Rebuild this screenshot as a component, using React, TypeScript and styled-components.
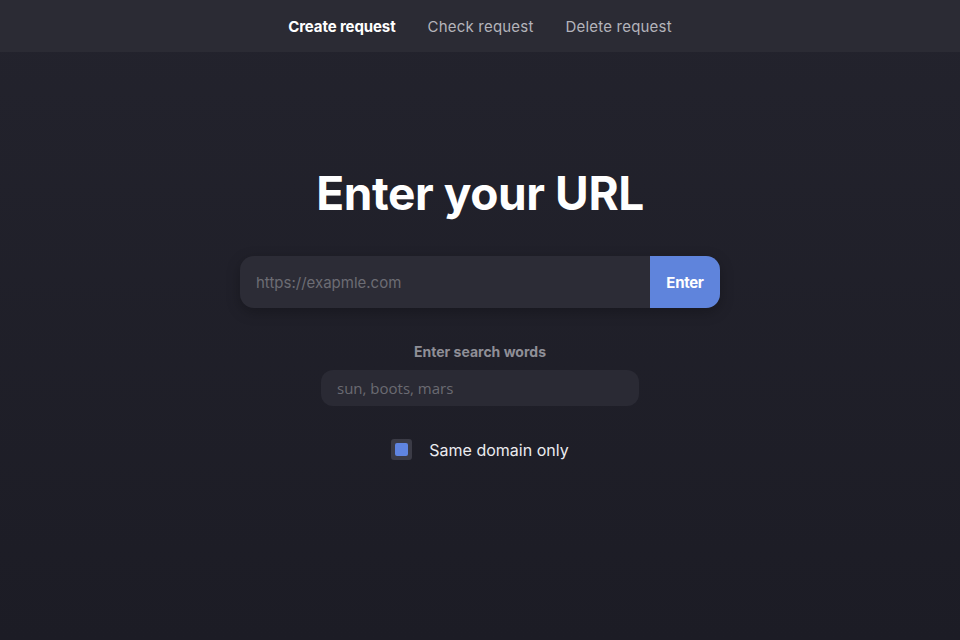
import React from "react";
import styled, { createGlobalStyle } from "styled-components";

const Global = createGlobalStyle`
  html, body { margin: 0; padding: 0; }
  body {
    background: linear-gradient(180deg, #23232d 0%, #1c1c25 100%);
    min-height: 100vh;
    font-family: Inter, "Noto Sans", sans-serif;
    color: #fff;
  }
  * { box-sizing: border-box; }
`;

const Page = styled.div`
  min-height: 640px;
  display: flex;
  flex-direction: column;
`;

const Header = styled.header`
  height: 52px;
  background: #2b2b34;
  display: flex;
  justify-content: center;
  align-items: center;
  gap: 32px;
`;

const NavItem = styled.a<{ $active?: boolean }>`
  font-size: 15px;
  font-weight: ${(p) => (p.$active ? 700 : 400)};
  color: ${(p) => (p.$active ? "#ffffff" : "#b4b4bb")};
  text-decoration: none;
  cursor: pointer;
  letter-spacing: ${(p) => (p.$active ? "-0.1px" : "0.2px")};
`;

const Main = styled.main`
  display: flex;
  flex-direction: column;
  align-items: center;
  padding-top: 113px;
`;

const Title = styled.h1`
  margin: 0;
  font-size: 46px;
  font-weight: 700;
  line-height: 56px;
  letter-spacing: -0.4px;
  color: #ffffff;
`;

const UrlForm = styled.div`
  margin-top: 35px;
  width: 480px;
  height: 52px;
  display: flex;
  border-radius: 14px;
  overflow: hidden;
  background: #2c2c36;
  box-shadow: 0 4px 14px rgba(0, 0, 0, 0.25);
`;

const UrlInput = styled.input`
  flex: 1;
  border: none;
  outline: none;
  background: transparent;
  padding: 0 16px;
  font-family: Inter, "Noto Sans", sans-serif;
  font-size: 15px;
  color: #ddd;
  &::placeholder { color: #6c6c74; }
`;

const EnterButton = styled.button`
  width: 70px;
  border: none;
  background: #5f84dc;
  color: #fff;
  font-family: Inter, "Noto Sans", sans-serif;
  font-weight: 700;
  font-size: 15px;
  letter-spacing: -0.3px;
  cursor: pointer;
`;

const Label = styled.div`
  margin-top: 35px;
  font-size: 14px;
  font-weight: 700;
  color: #8f8f97;
  line-height: 18px;
`;

const SearchInput = styled.input`
  margin-top: 9px;
  width: 318px;
  height: 36px;
  border: none;
  outline: none;
  border-radius: 12px;
  background: #2a2a34;
  padding: 0 16px;
  font-family: "Open Sans", "Noto Sans", sans-serif;
  font-size: 15px;
  color: #ddd;
  &::placeholder { color: #6a6a72; }
`;

const CheckRow = styled.label`
  margin-top: 33px;
  display: flex;
  align-items: center;
  gap: 17px;
  cursor: pointer;
`;

const Box = styled.span`
  width: 21px;
  height: 21px;
  border-radius: 3px;
  background: #3b3b46;
  display: flex;
  align-items: center;
  justify-content: center;
`;

const Tick = styled.span`
  width: 13px;
  height: 13px;
  border-radius: 2px;
  background: #5f84e0;
`;

const CheckText = styled.span`
  font-size: 16px;
  color: #ececf0;
`;

export default function App() {
  return (
    <>
      <Global />
      <Page>
        <Header>
          <NavItem $active>Create request</NavItem>
          <NavItem>Check request</NavItem>
          <NavItem>Delete request</NavItem>
        </Header>
        <Main>
          <Title>Enter your URL</Title>
          <UrlForm>
            <UrlInput placeholder="https://exapmle.com" />
            <EnterButton>Enter</EnterButton>
          </UrlForm>
          <Label>Enter search words</Label>
          <SearchInput placeholder="sun, boots, mars" />
          <CheckRow>
            <Box>
              <Tick />
            </Box>
            <CheckText>Same domain only</CheckText>
          </CheckRow>
        </Main>
      </Page>
    </>
  );
}
